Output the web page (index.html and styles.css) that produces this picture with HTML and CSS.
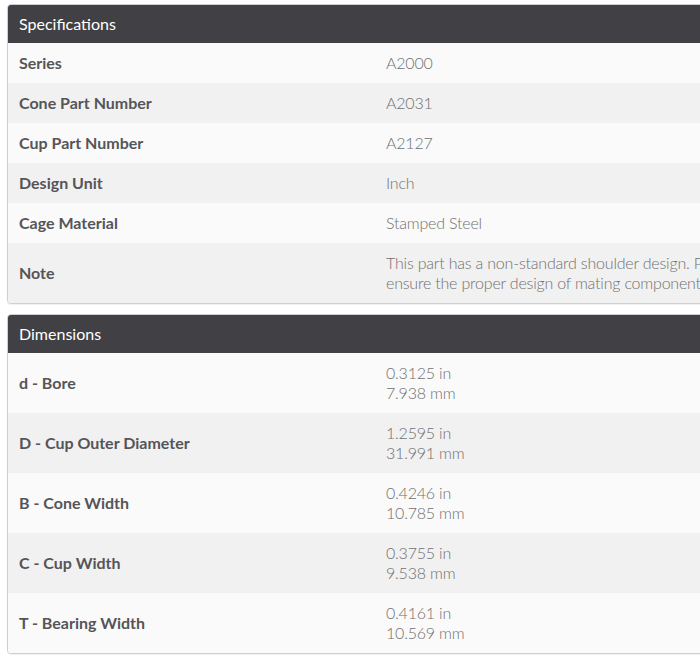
FILE: index.html
```html
<!DOCTYPE html>
<html lang="en">
<head>
<meta charset="utf-8">
<title>Specifications</title>
<link rel="stylesheet" href="styles.css">
</head>
<body>
<div class="page">
  <section class="panel">
    <h2 class="panel-title">Specifications</h2>
    <table class="spec">
      <colgroup><col class="c-label"><col></colgroup>
      <tbody>
        <tr><th>Series</th><td>A2000</td></tr>
        <tr><th>Cone Part Number</th><td>A2031</td></tr>
        <tr><th>Cup Part Number</th><td>A2127</td></tr>
        <tr><th>Design Unit</th><td>Inch</td></tr>
        <tr><th>Cage Material</th><td>Stamped Steel</td></tr>
        <tr><th>Note</th><td>This part has a non-standard shoulder design. Please ensure the proper design of mating components.</td></tr>
      </tbody>
    </table>
  </section>
  <section class="panel">
    <h2 class="panel-title">Dimensions</h2>
    <table class="spec">
      <colgroup><col class="c-label"><col></colgroup>
      <tbody>
        <tr><th>d - Bore</th><td>0.3125 in<br>7.938 mm</td></tr>
        <tr><th>D - Cup Outer Diameter</th><td>1.2595 in<br>31.991 mm</td></tr>
        <tr><th>B - Cone Width</th><td>0.4246 in<br>10.785 mm</td></tr>
        <tr><th>C - Cup Width</th><td>0.3755 in<br>9.538 mm</td></tr>
        <tr><th>T - Bearing Width</th><td>0.4161 in<br>10.569 mm</td></tr>
      </tbody>
    </table>
  </section>
</div>
</body>
</html>
```
FILE: styles.css
```css
html, body {
  margin: 0;
  padding: 0;
  background: #ffffff;
  overflow: hidden;
}
.page {
  padding: 4px 0 0 7px;
  font-family: Lato, "Open Sans", sans-serif;
  width: 800px;
}
.panel {
  width: 780px;
  border: 1px solid #cfcfcf;
  border-radius: 4px;
  overflow: hidden;
  margin-bottom: 10px;
  background: #fafafa;
  box-shadow: 0 1px 1px rgba(0,0,0,0.06);
}
.panel-title {
  margin: 0;
  background: #414145;
  color: #ffffff;
  font-size: 16px;
  font-weight: 400;
  line-height: 20px;
  padding: 9px 11px 9px 11px;
}
.spec {
  width: 100%;
  border-collapse: collapse;
  table-layout: fixed;
}
.c-label {
  width: 367px;
}
.spec th,
.spec td {
  text-align: left;
  vertical-align: middle;
  font-size: 16px;
  line-height: 20px;
  padding: 10px 11px;
}
.spec th {
  font-weight: 700;
  color: #555559;
}
.spec td {
  font-weight: 300;
  color: #707070;
  letter-spacing: -0.2px;
}
.spec tr:nth-child(odd) {
  background: #fafafa;
}
.spec tr:nth-child(even) {
  background: #f1f1f1;
}
```
